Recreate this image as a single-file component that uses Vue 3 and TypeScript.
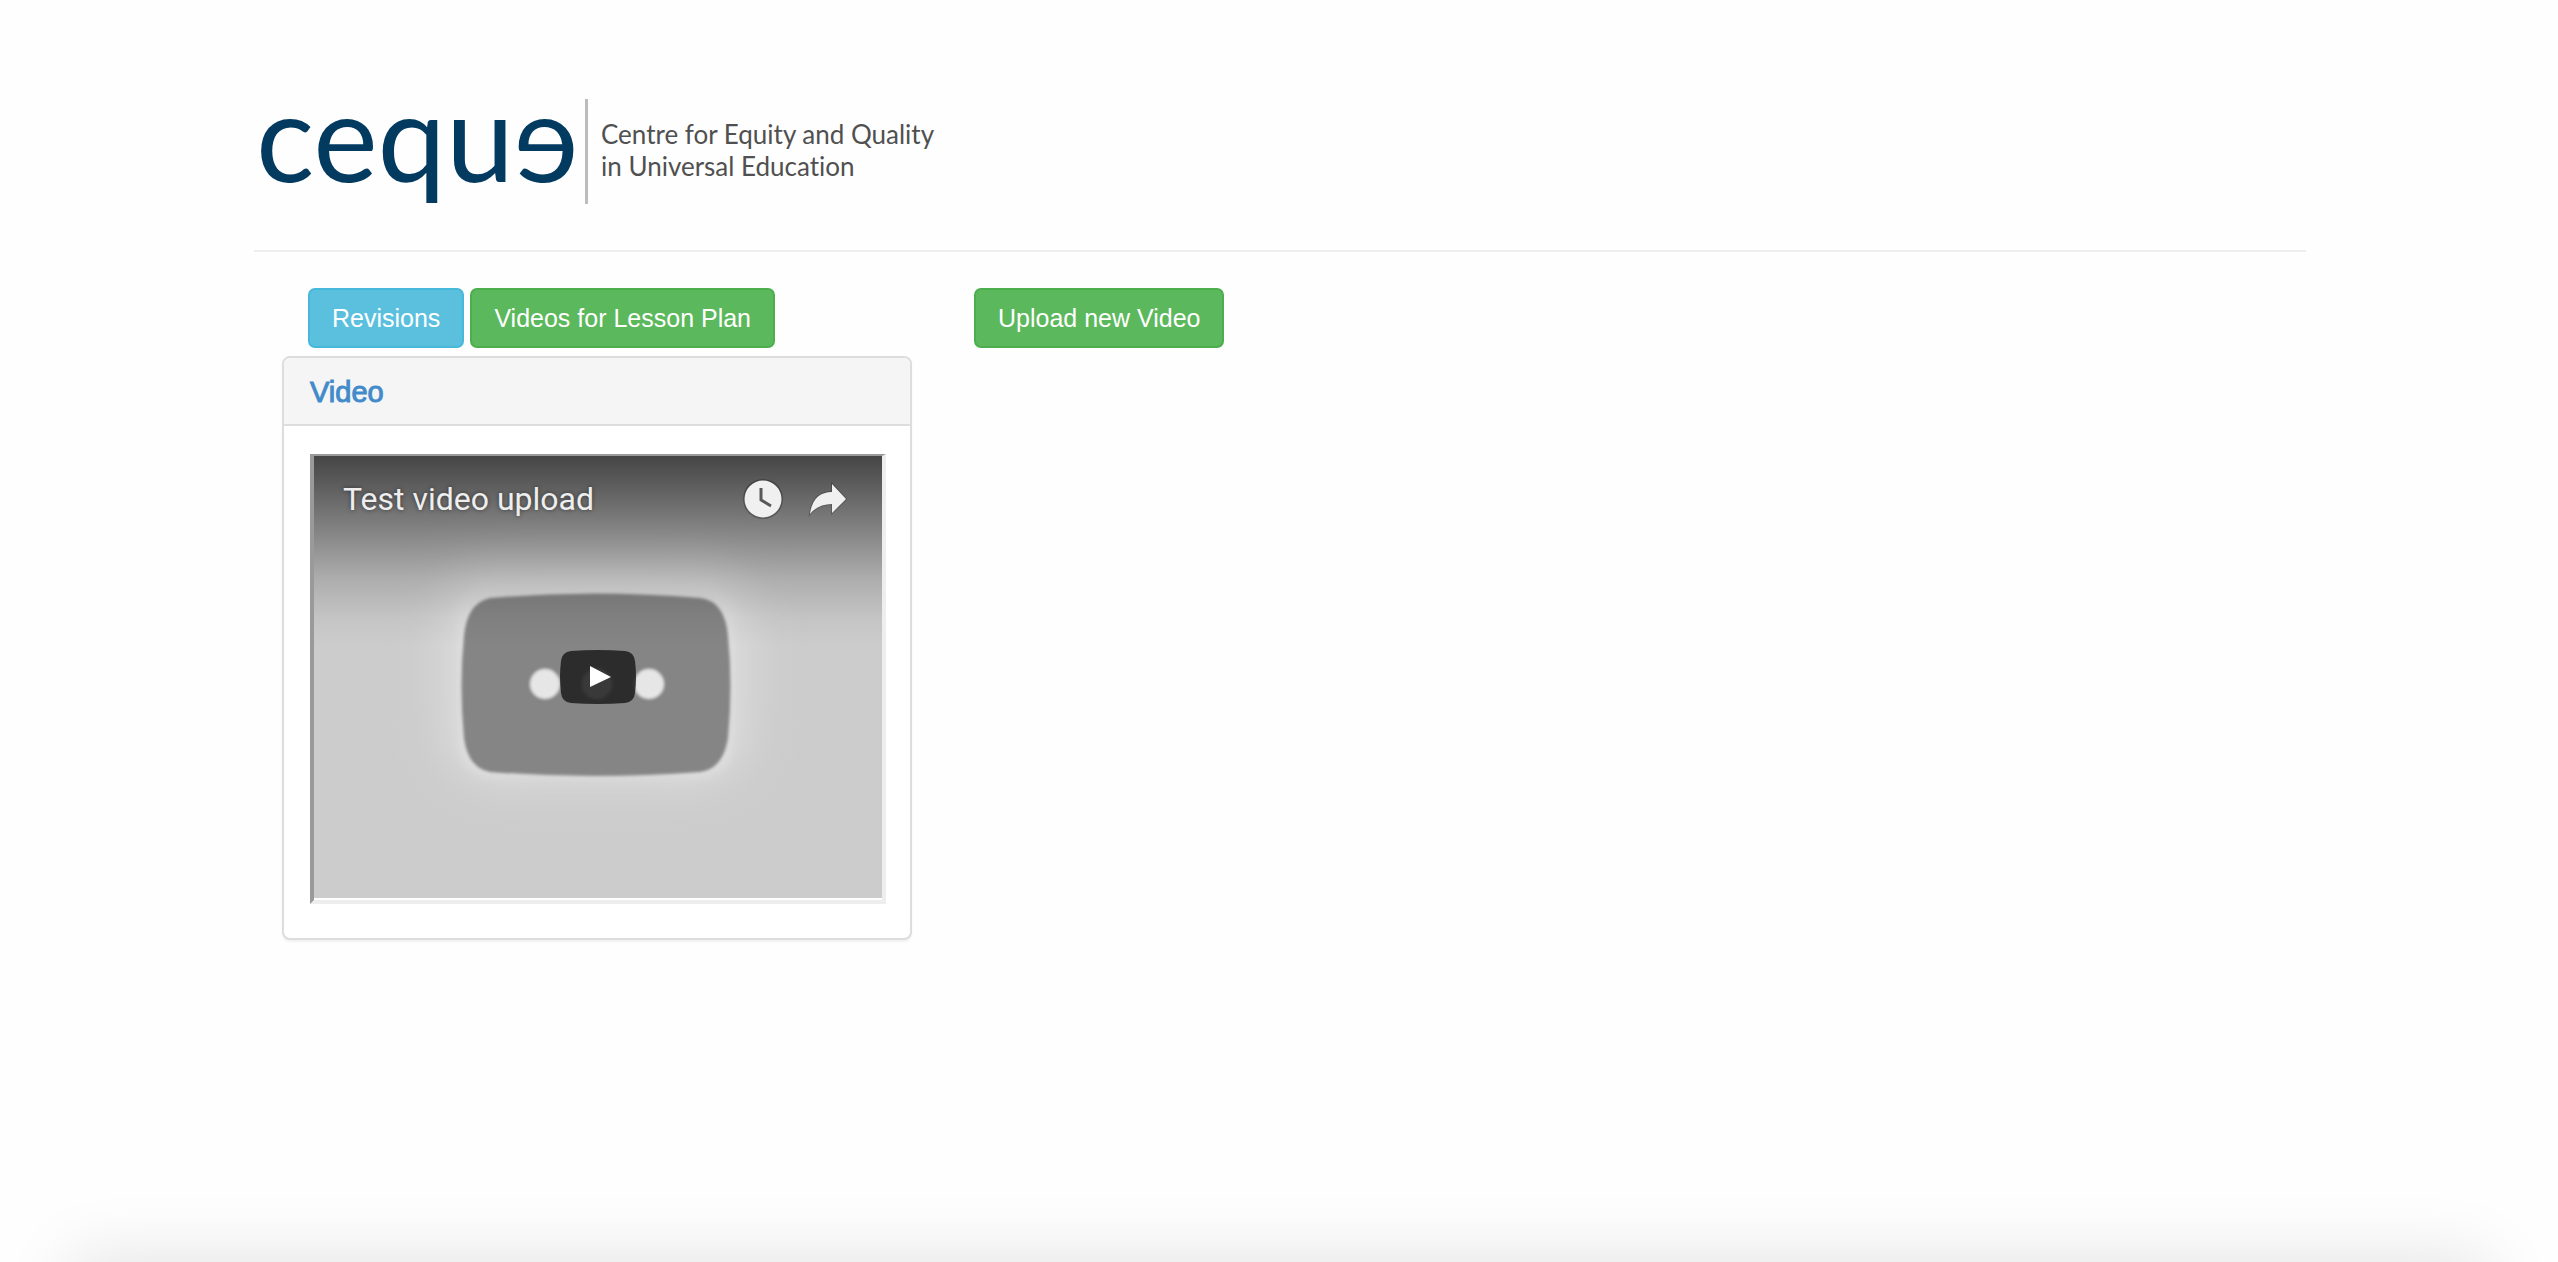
<script setup lang="ts">
interface Action {
  label: string
  kind: 'info' | 'success'
}

const lessonActions: Action[] = [
  { label: 'Revisions', kind: 'info' },
  { label: 'Videos for Lesson Plan', kind: 'success' },
]
const uploadAction: Action = { label: 'Upload new Video', kind: 'success' }
const videoTitle = 'Test video upload'
</script>

<template>
  <div class="page">
    <header class="brand">
      <span class="wordmark">cequɘ</span>
      <p class="tagline">Centre for Equity and Quality<br />in Universal Education</p>
    </header>

    <main class="content">
      <div class="toolbar">
        <div class="lesson-actions">
          <button v-for="a in lessonActions" :key="a.label" type="button" class="btn" :class="a.kind">{{ a.label }}</button>
        </div>
        <button type="button" class="btn" :class="uploadAction.kind">{{ uploadAction.label }}</button>
      </div>

      <section class="panel">
        <h4 class="panel-title"><a href="#">Video</a></h4>
        <div class="panel-body">
          <div class="player">
            <svg class="poster" viewBox="0 0 568 442" preserveAspectRatio="none" aria-hidden="true">
              <defs>
                <filter id="halo" x="-50%" y="-50%" width="200%" height="200%"><feGaussianBlur stdDeviation="24" /></filter>
                <filter id="rim" x="-20%" y="-20%" width="140%" height="140%"><feGaussianBlur stdDeviation="5" /></filter>
                <filter id="soft" x="-10%" y="-10%" width="120%" height="120%"><feGaussianBlur stdDeviation="1.8" /></filter>
                <linearGradient id="shade" x1="0" y1="0" x2="0" y2="1">
                  <stop offset="0" stop-color="#000" stop-opacity=".66" />
                  <stop offset=".12" stop-color="#000" stop-opacity=".57" />
                  <stop offset=".4" stop-color="#000" stop-opacity=".35" />
                  <stop offset=".65" stop-color="#000" stop-opacity=".15" />
                  <stop offset=".85" stop-color="#000" stop-opacity=".04" />
                  <stop offset="1" stop-color="#000" stop-opacity="0" />
                </linearGradient>
              </defs>
              <rect width="568" height="442" fill="#ccc" />
              <rect x="132" y="98" width="300" height="226" rx="50" fill="#dedede" filter="url(#halo)" />
              <rect x="145" y="129" width="274" height="192" rx="34" fill="#dedede" filter="url(#rim)" />
              <g filter="url(#soft)">
                <path d="M176 142Q281 133 386 142Q411 145 414 180Q419 229 414 282Q409 313 386 316Q281 324 176 316Q154 312 150 282Q145 229 150 180Q153 147 176 142Z" fill="#858585" />
                <circle cx="231" cy="228" r="15" fill="#e6e6e6" />
                <circle cx="283" cy="228" r="15" fill="#e6e6e6" />
                <circle cx="335" cy="228" r="15" fill="#e6e6e6" />
              </g>
              <rect width="568" height="190" fill="url(#shade)" />
            </svg>

            <div class="player-bar">
              <a href="#" class="video-title">{{ videoTitle }}</a>
              <button type="button" class="icon-btn" aria-label="Watch later">
                <svg width="40" height="40" viewBox="0 0 40 40">
                  <circle cx="20" cy="20" r="20" fill="#000" opacity=".25" />
                  <circle cx="20" cy="20" r="18.5" fill="#f0f0f0" />
                  <path d="M18 9V21L28 27" fill="none" stroke="#585858" stroke-width="3" />
                </svg>
              </button>
              <button type="button" class="icon-btn" aria-label="Share">
                <svg width="40" height="40" viewBox="0 0 40 40">
                  <path d="M24 5L38 20L24 34V25Q10 25 2 35Q5 13 24 13Z" fill="#f0f0f0" stroke="#000" stroke-opacity=".2" stroke-width="2" paint-order="stroke" />
                </svg>
              </button>
            </div>

            <button type="button" class="play" aria-label="Play">
              <svg width="76" height="54" viewBox="0 0 76 54">
                <path d="M11 1Q38-1 65 1Q74 2 75 11Q77 27 75 43Q74 52 65 53Q38 55 11 53Q2 52 1 43Q-1 27 1 11Q2 2 11 1Z" fill="#1f1f1f" fill-opacity=".87" />
                <path d="M30 16L51 27L30 37Z" fill="#fff" />
              </svg>
            </button>
          </div>
        </div>
      </section>
    </main>
  </div>
</template>

<style>
body {
  margin: 0;
  background: #fefefe;
}
</style>

<style scoped>
.page {
  position: relative;
  box-sizing: border-box;
  min-height: 100vh;
  padding: 82px 252px 0 254px;
  overflow: hidden;
  font-family: "Liberation Sans", Arial, sans-serif;
}

/* soft shade rising from the window's lower edge */
.page::after {
  content: "";
  position: absolute;
  left: 70px;
  right: 70px;
  top: 100%;
  height: 200px;
  box-shadow: 0 -4px 70px rgba(0, 0, 0, 0.11);
  pointer-events: none;
}

.brand {
  display: flex;
  align-items: flex-start;
  height: 168px;
  border-bottom: 2px solid #eee;
}

.wordmark {
  width: 326px;
  padding-left: 2px;
  box-sizing: border-box;
  font-family: Lato, sans-serif;
  font-size: 122px;
  line-height: 106px;
  color: #023a60;
  white-space: nowrap;
}

.tagline {
  height: 105px;
  box-sizing: border-box;
  margin: 17px 0 0 5px;
  padding: 19px 0 0 13px;
  border-left: 3px solid #bcbcbc;
  font-family: Lato, sans-serif;
  font-size: 26px;
  font-variant-ligatures: none;
  line-height: 32px;
  color: #505050;
  white-space: nowrap;
}

.content {
  padding: 36px 28px 0;
}

.toolbar {
  display: flex;
  padding-left: 26px;
  margin-bottom: 8px;
}

.lesson-actions {
  display: flex;
  gap: 6px;
  width: 666px;
}

.btn {
  height: 60px;
  padding: 0 22px;
  border: 2px solid;
  border-radius: 7px;
  font-family: inherit;
  font-size: 25px;
  line-height: 36px;
  color: #fff;
  white-space: nowrap;
}

.btn.info {
  background: #5bc0de;
  border-color: #46b8da;
}

.btn.success {
  background: #5cb85c;
  border-color: #4cae4c;
}

.panel {
  box-sizing: border-box;
  width: 630px;
  border: 2px solid #ddd;
  border-radius: 8px;
  background: #fff;
  box-shadow: 0 2px 2px rgba(0, 0, 0, 0.05);
}

.panel-title {
  margin: 0;
  padding: 18px 26px 16px;
  border-bottom: 2px solid #ddd;
  border-radius: 6px 6px 0 0;
  background: #f5f5f5;
  font-size: 29px;
  font-weight: 400;
  line-height: 32px;
}

.panel-title a {
  color: #428bca;
  text-decoration: none;
  -webkit-text-stroke: 1px #428bca;
}

.panel-body {
  padding: 28px 24px 34px 26px;
}

.player {
  position: relative;
  display: flex;
  flex-direction: column;
  height: 442px;
  padding-bottom: 2px;
  border-style: solid;
  border-width: 2px 4px 4px;
  border-color: #9a9a9a #eee #eee #9a9a9a;
}

.poster {
  position: absolute;
  left: 0;
  top: 0;
  width: 100%;
  height: 442px;
}

.player-bar {
  position: relative;
  display: flex;
  align-items: center;
  gap: 25px;
  padding: 23px 34px 0 29px;
}

.video-title {
  flex: 1;
  font-family: Roboto, sans-serif;
  font-size: 32px;
  line-height: 40px;
  color: #eee;
  text-decoration: none;
  text-shadow: 0 0 4px rgba(0, 0, 0, 0.5);
}

.icon-btn,
.play {
  display: block;
  padding: 0;
  border: 0;
  background: none;
}

.icon-btn svg,
.play svg {
  display: block;
}

.play {
  position: absolute;
  left: calc(50% - 38px);
  top: 194px;
}
</style>
